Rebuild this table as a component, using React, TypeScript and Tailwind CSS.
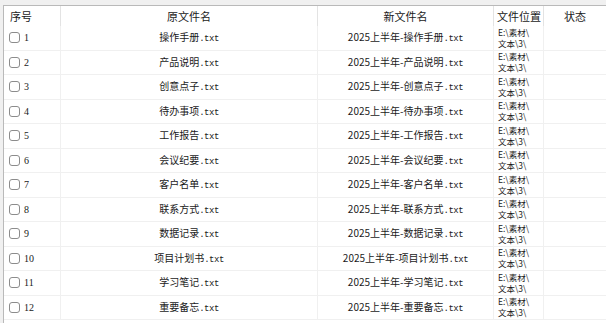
const names = [
  "操作手册",
  "产品说明",
  "创意点子",
  "待办事项",
  "工作报告",
  "会议纪要",
  "客户名单",
  "联系方式",
  "数据记录",
  "项目计划书",
  "学习笔记",
  "重要备忘",
];

const cols = "grid grid-cols-[57px_257px_176px_50px_70px]";

export default function App() {
  return (
    <div
      className="w-[606px] h-[323px] overflow-hidden bg-[#f0f0f0] pt-[5px] pl-[3px] text-[#1a1a1a]"
      style={{ fontFamily: '"Noto Sans CJK SC", "Noto Sans", sans-serif' }}
    >
      <div className="w-[620px] h-full bg-white border-t border-l border-[#b9b9b9]">
        {/* header */}
        <div className={`${cols} h-[20px] text-[11px] leading-[20px]`}>
          <span className="pl-[6px] border-r border-[#e3e3e3]">序号</span>
          <span className="text-center border-r border-[#e3e3e3]">原文件名</span>
          <span className="text-center border-r border-[#e3e3e3]">新文件名</span>
          <span className="pl-[3px] border-r border-[#e3e3e3]">文件位置</span>
          <span className="text-center pr-[8px]">状态</span>
        </div>

        {names.map((name, i) => (
          <div
            key={name}
            className={`${cols} h-[24.5px] border-b border-[#f0f0f0] text-[10px]`}
          >
            <div className="flex items-center h-full pl-[5px] border-r border-[#f0f0f0]">
              <span className="w-[11px] h-[11px] rounded-[3px] border border-[#8c8c8c] bg-white" />
              <span className="ml-[4px] font-['Liberation_Serif'] text-[10px]">{i + 1}</span>
            </div>
            <div className="flex items-center justify-center h-full border-r border-[#f0f0f0]">
              <span>
                {name}
                <span className="font-['Liberation_Mono'] text-[9px] tracking-[-0.5px]">.txt</span>
              </span>
            </div>
            <div className="flex items-center justify-center h-full border-r border-[#f0f0f0]">
              <span>
                2025上半年-{name}
                <span className="font-['Liberation_Mono'] text-[9px] tracking-[-0.5px]">.txt</span>
              </span>
            </div>
            <div className="flex flex-col justify-center h-full pl-[4px] text-[8.5px] leading-[11px] border-r border-[#f0f0f0]">
              <span>E:\素材\</span>
              <span>文本\3\</span>
            </div>
            <div />
          </div>
        ))}
      </div>
    </div>
  );
}
